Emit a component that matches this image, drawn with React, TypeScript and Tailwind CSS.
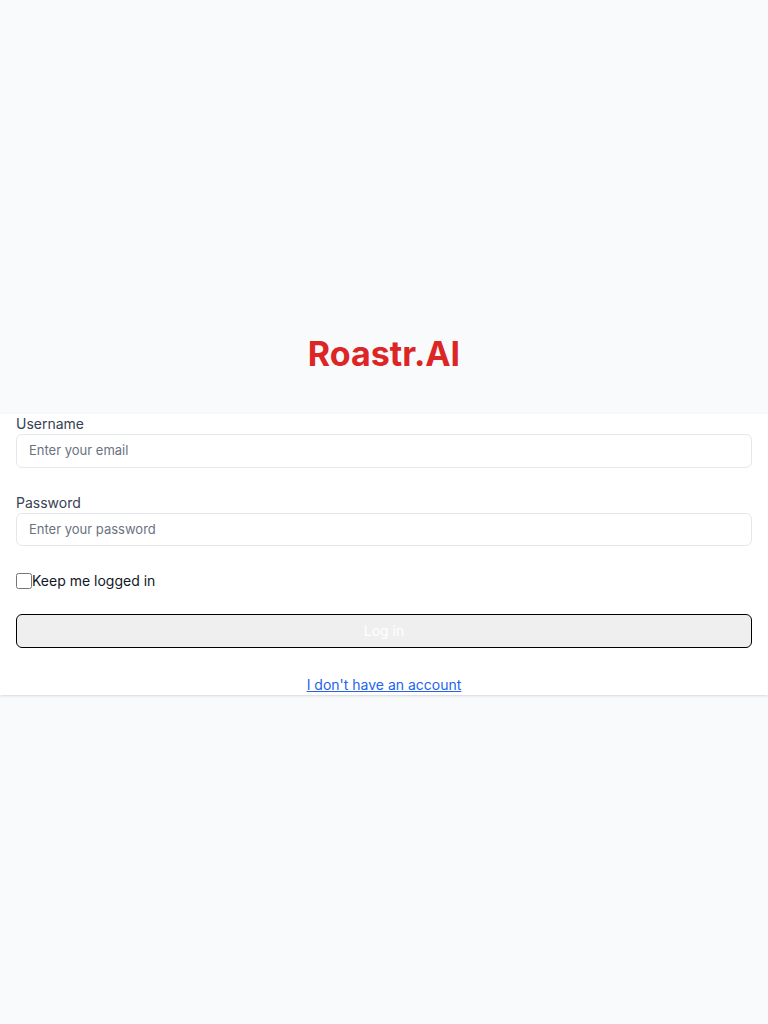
export default function App() {
	return (
		<div
			className="flex min-h-screen flex-col justify-center bg-gray-50 pt-[5px]"
			style={{ fontFamily: 'Inter, "Liberation Sans", sans-serif' }}
		>
			<h1 className="text-center text-[34px] leading-10 font-bold text-[#dc2626]">Roastr.AI</h1>

			<div className="mt-10 bg-white px-4 shadow">
				<form className="flex flex-col" onSubmit={(e) => e.preventDefault()}>
					<div>
						<label className="block text-sm text-gray-700">Username</label>
						<input
							type="email"
							placeholder="Enter your email"
							className="block w-full rounded-md border border-gray-200 px-3 py-1.5 text-[13px] text-gray-900 placeholder:text-gray-500 outline-none"
						/>
					</div>
					<div className="mt-[25px]">
						<label className="block text-sm text-gray-700">Password</label>
						<input
							type="password"
							placeholder="Enter your password"
							className="block w-full rounded-md border border-gray-200 px-3 py-1.5 text-[13px] text-gray-900 placeholder:text-gray-500 outline-none"
						/>
					</div>
					<label className="mt-[25px] flex items-center text-sm text-gray-900">
						<input type="checkbox" className="m-0 h-4 w-4" />
						Keep me logged in
					</label>
					<button
						type="submit"
						disabled
						className="mt-[23px] w-full rounded-md border border-black bg-[#efefef] py-1.5 text-sm text-white"
					>
						Log in
					</button>
				</form>
				<p className="mt-[27px] text-center text-sm">
					<a href="#" className="text-[#2563eb] underline">
						I don't have an account
					</a>
				</p>
			</div>
		</div>
	);
}
